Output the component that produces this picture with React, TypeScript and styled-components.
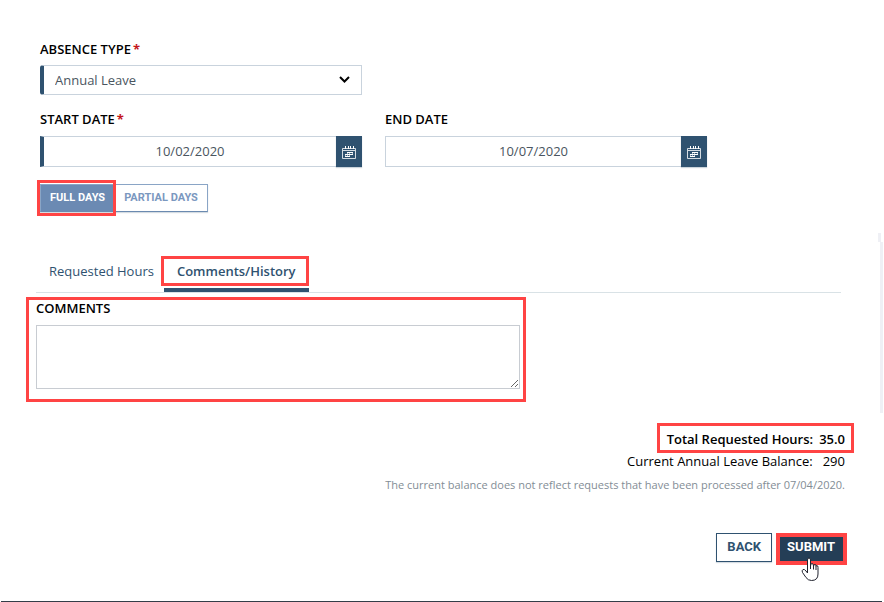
import React from "react";
import styled, { createGlobalStyle, css } from "styled-components";

const RED = "#ff4444";
const NAVY = "#2f5270";
const BORDER = "#c9d3dd";

const GlobalStyle = createGlobalStyle`
  *, *::before, *::after { box-sizing: border-box; }
  body {
    margin: 0;
    background: #fff;
    color: #000;
    font-family: "Open Sans", "Noto Sans", sans-serif;
    font-size: 13px;
    line-height: 18px;
  }
  button, input, select, textarea { font: inherit; border-radius: 0; }
`;

const Page = styled.main`
  position: relative;
  display: flex;
  flex-direction: column;
  min-height: 100vh;
  padding: 40px 39px 0 36px;
`;

const Fields = styled.section`
  display: grid;
  grid-template-columns: repeat(2, minmax(0, 322px));
  column-gap: 23px;
  row-gap: 15px;
  padding-left: 4px;
`;

const Field = styled.div<{ $gap: number }>`
  display: flex;
  flex-direction: column;
  gap: ${(p) => p.$gap}px;
`;

const Label = styled.label`
  font-weight: 600;
  line-height: 18px;
`;

const Required = styled.span`
  margin-left: 2px;
  color: #c4161c;
  font-weight: 700;
`;

const requiredEdge = css`
  border-left: 4px solid ${NAVY};
`;

const SelectBox = styled.div`
  position: relative;
  display: flex;
`;

const Select = styled.select`
  flex: 1;
  height: 30px;
  padding: 0 32px 0 11px;
  appearance: none;
  border: 1px solid ${BORDER};
  ${requiredEdge}
  border-radius: 3px 0 0 3px;
  background: #fff;
  color: #4a5560;
`;

const Chevron = styled.svg`
  position: absolute;
  right: 12px;
  top: 11px;
  pointer-events: none;
`;

const DateRow = styled.div`
  display: flex;
  height: 31px;
`;

const DateInput = styled.input<{ $required?: boolean }>`
  flex: 1;
  min-width: 0;
  padding: 0 0 1px;
  border: 1px solid ${BORDER};
  border-right: 0;
  ${(p) => p.$required && requiredEdge}
  background: #fff;
  color: #4a5560;
  text-align: center;
`;

const CalendarButton = styled.button`
  display: flex;
  align-items: center;
  justify-content: center;
  width: 26px;
  padding: 2px 0 0;
  border: 0;
  background: ${NAVY};
  color: #fff;
  box-shadow: 0 1px 1px rgba(47, 82, 112, 0.25);
`;

const Highlight = styled.span<{ $inset: string; $width?: number }>`
  position: absolute;
  inset: ${(p) => p.$inset};
  border: ${(p) => p.$width ?? 3}px solid ${RED};
  pointer-events: none;
`;

const Marked = styled.div`
  position: relative;
`;

const Toggle = styled.div`
  display: flex;
  margin: 17px 0 0 4px;
`;

const ToggleButton = styled.button<{ $on?: boolean }>`
  height: 28px;
  padding: 0 9px;
  border: 1px solid #8aa5c6;
  border-left-width: ${(p) => (p.$on ? "1px" : "0")};
  border-bottom-color: #6b8ab0;
  background: ${(p) => (p.$on ? "#6b8ab3" : "#fff")};
  color: ${(p) => (p.$on ? "#fff" : "#7b98bf")};
  box-shadow: 0 1px 1px rgba(47, 82, 112, 0.2);
  font-family: Roboto, sans-serif;
  font-size: 11px;
  font-weight: 700;
`;

const Tabs = styled.div`
  display: flex;
  align-items: flex-end;
  margin: 42px 4px 0 0;
  border-bottom: 1px solid #d9e2e6;
`;

const Tab = styled.button<{ $active?: boolean }>`
  height: 38px;
  padding: 0 ${(p) => (p.$active ? 13 : 10)}px 0 13px;
  border: 0;
  border-bottom: 4px solid ${(p) => (p.$active ? NAVY : "transparent")};
  background: none;
  color: ${NAVY};
  font-weight: ${(p) => (p.$active ? 600 : 400)};
`;

const Comments = styled.section`
  position: relative;
  display: flex;
  flex-direction: column;
  gap: 8px;
  width: 60%;
  max-width: 484px;
  margin-top: 6px;
`;

const CommentBox = styled.textarea`
  width: 100%;
  height: 64px;
  border: 1px solid #c8ccd2;
  background: #fff;
`;

const Summary = styled.section`
  display: flex;
  flex-direction: column;
  align-items: flex-end;
  gap: 4px;
  margin-top: 41px;
`;

const SummaryLine = styled.div<{ $bold?: boolean }>`
  position: relative;
  display: flex;
  gap: ${(p) => (p.$bold ? 6 : 10)}px;
  font-weight: ${(p) => (p.$bold ? 600 : 400)};
`;

const Note = styled.p`
  margin: 2px 0 0;
  color: #838d96;
  font-size: 11px;
`;

const Actions = styled.footer`
  display: flex;
  justify-content: flex-end;
  gap: 5px;
  margin-top: 39px;
`;

const ActionButton = styled.button<{ $primary?: boolean }>`
  height: 29px;
  padding: 0 ${(p) => (p.$primary ? 9 : 10)}px 1px;
  border: 1px solid ${(p) => (p.$primary ? "#243e56" : NAVY)};
  background: ${(p) => (p.$primary ? "#243e56" : "#fff")};
  color: ${(p) => (p.$primary ? "#fff" : NAVY)};
  box-shadow: 0 1px 1px rgba(47, 82, 112, 0.2);
  font-family: Roboto, sans-serif;
  font-weight: 700;
`;

const Pointer = styled.svg`
  position: absolute;
  left: 24px;
  top: 24px;
`;

const ScrollTrack = styled.div`
  position: absolute;
  right: 1px;
  top: 242px;
  width: 3px;
  height: 171px;
  background: #eff0f5;
  &::before {
    content: "";
    position: absolute;
    right: 2px;
    bottom: 100%;
    width: 3px;
    height: 9px;
    background: #eff0f5;
  }
`;

const BottomRule = styled.hr`
  width: calc(100% + 72px);
  margin: auto 0 0 -35px;
  border: 0;
  border-top: 1px solid #343d48;
`;

function CalendarIcon() {
  return (
    <svg width="14" height="14" viewBox="0 0 14 14" fill="none" stroke="currentColor" aria-hidden="true">
      <path d="M.5 2.500h13v10H.5z" strokeOpacity=".8" />
      <path d="M1 4.500h12" strokeOpacity=".8" />
      <path d="M3.500 0v3M6.500 0v3M8.500 0v3M11.500 0v3" />
      <path d="M5 6.500h6M3 8.500h8M3 10.500h5" />
      <path d="M3.500 8v3M5.500 6v5M7.500 6v5M10.500 6v3" strokeOpacity=".6" />
    </svg>
  );
}

function DateField(props: { id: string; label: string; value: string; required?: boolean }) {
  return (
    <Field $gap={8}>
      <Label htmlFor={props.id}>
        {props.label}
        {props.required && <Required>*</Required>}
      </Label>
      <DateRow>
        <DateInput id={props.id} type="text" defaultValue={props.value} $required={props.required} />
        <CalendarButton type="button" aria-label={`Choose ${props.label.toLowerCase()}`}>
          <CalendarIcon />
        </CalendarButton>
      </DateRow>
    </Field>
  );
}

export default function App() {
  return (
    <>
      <GlobalStyle />
      <Page>
        <Fields>
          <Field $gap={7}>
            <Label htmlFor="absence">
              ABSENCE TYPE<Required>*</Required>
            </Label>
            <SelectBox>
              <Select id="absence" defaultValue="annual">
                <option value="annual">Annual Leave</option>
              </Select>
              <Chevron width="11" height="8" viewBox="0 0 11 8" fill="none" stroke="#000" strokeWidth="2">
                <path d="M1 1l4.500 4.500L10 1" />
              </Chevron>
            </SelectBox>
          </Field>
          <div />
          <DateField id="start" label="START DATE" value="10/02/2020" required />
          <DateField id="end" label="END DATE" value="10/07/2020" />
        </Fields>

        <Toggle>
          <Marked>
            <ToggleButton type="button" $on aria-pressed="true">
              FULL DAYS
            </ToggleButton>
            <Highlight $inset="-4px -1px -4px -3px" />
          </Marked>
          <ToggleButton type="button" aria-pressed="false">
            PARTIAL DAYS
          </ToggleButton>
        </Toggle>

        <Tabs role="tablist">
          <Tab type="button" role="tab" aria-selected="false">
            Requested Hours
          </Tab>
          <Marked>
            <Tab type="button" role="tab" aria-selected="true" $active>
              Comments/History
            </Tab>
            <Highlight $inset="2px 0 6px -3px" />
          </Marked>
        </Tabs>

        <Comments>
          <Label htmlFor="comments">COMMENTS</Label>
          <CommentBox id="comments" />
          <Highlight $inset="-2px -6px -13px -10px" />
        </Comments>

        <Summary>
          <SummaryLine $bold>
            <span>Total Requested Hours:</span>
            <span>35.0</span>
            <Highlight $inset="-7px -9px -5px -10px" />
          </SummaryLine>
          <SummaryLine>
            <span>Current Annual Leave Balance:</span>
            <span>290</span>
          </SummaryLine>
          <Note>The current balance does not reflect requests that have been processed after 07/04/2020.</Note>
        </Summary>

        <Actions>
          <ActionButton type="button">BACK</ActionButton>
          <Marked>
            <ActionButton type="button" $primary>
              SUBMIT
            </ActionButton>
            <Highlight $inset="0 -2px -3px -1px" $width={4} />
            <Pointer width="18" height="25" viewBox="0 0 18 25" aria-hidden="true">
              <path
                d="M6.500 14V3Q6.500 1 8 1T9.500 3V9Q9.500 6.500 11 6.500T12.500 9Q12.500 7.500 14 7.500T15 9.500Q15 8.500 16 8.500T17 10.500V17Q17 23.500 10.500 23.500Q7 23.500 5 20.500L1.500 15.500Q.5 13.500 2 12.500Q3.500 12 5 14L6.500 16Z"
                fill="#fff"
                stroke="#20222e"
              />
              <path d="M9.500 8v4M12.500 9v3.500M15 9.500V13" stroke="#20222e" fill="none" />
            </Pointer>
          </Marked>
        </Actions>

        <BottomRule />
        <ScrollTrack />
      </Page>
    </>
  );
}
